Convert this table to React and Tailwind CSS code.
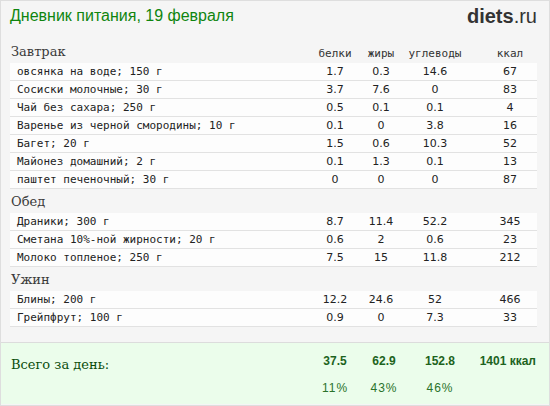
import React from "react";

const sections = [
  {
    title: "Завтрак",
    rows: [
      ["овсянка на воде; 150 г", "1.7", "0.3", "14.6", "67"],
      ["Сосиски молочные; 30 г", "3.7", "7.6", "0", "83"],
      ["Чай без сахара; 250 г", "0.5", "0.1", "0.1", "4"],
      ["Варенье из черной смородины; 10 г", "0.1", "0", "3.8", "16"],
      ["Багет; 20 г", "1.5", "0.6", "10.3", "52"],
      ["Майонез домашний; 2 г", "0.1", "1.3", "0.1", "13"],
      ["паштет печеночный; 30 г", "0", "0", "0", "87"],
    ],
  },
  {
    title: "Обед",
    rows: [
      ["Драники; 300 г", "8.7", "11.4", "52.2", "345"],
      ["Сметана 10%-ной жирности; 20 г", "0.6", "2", "0.6", "23"],
      ["Молоко топленое; 250 г", "7.5", "15", "11.8", "212"],
    ],
  },
  {
    title: "Ужин",
    rows: [
      ["Блины; 200 г", "12.2", "24.6", "52", "466"],
      ["Грейпфрут; 100 г", "0.9", "0", "7.3", "33"],
    ],
  },
];

const cols = "grid grid-cols-[300px_50px_42px_66px_69px]";

export default function App() {
  return (
    <div className="w-[550px] h-[406px] bg-[#f5f5f5] border border-[#dedede] overflow-hidden text-[#222]">
      <div className="h-[38px] flex justify-between items-start pl-[9px] pr-[12px] pt-[4px]">
        <h1 className="font-['Liberation_Sans',sans-serif] text-[16px] leading-[22px] text-[#0f850f]">
          Дневник питания, 19 февраля
        </h1>
        <div className="font-['Liberation_Sans',sans-serif] text-[20px] leading-[22px] text-[#333]">
          <span className="font-bold">diets</span>.ru
        </div>
      </div>

      <div className="pl-[9px] pr-[12px]">
        {sections.map((s, si) => (
          <div key={s.title}>
            <div className={`${cols} h-[24px] items-end pb-[3px]`}>
              <div className="font-['DejaVu_Serif',serif] text-[13px] leading-[16px] text-[#3a3a3a] pl-[1px]">
                {s.title}
              </div>
              {si === 0 &&
                ["белки", "жиры", "углеводы", "ккал"].map((h, i) => (
                  <div
                    key={h}
                    className={`text-center font-['DejaVu_Sans_Mono',monospace] text-[11px] leading-[12px] text-[#333] ${i === 3 ? "pl-[15px]" : ""}`}
                  >
                    {h}
                  </div>
                ))}
            </div>
            {s.rows.map((r) => (
              <div
                key={r[0]}
                className={`${cols} h-[18px] items-center bg-[#fdfdfd] border-b border-[#e2e2e2] text-[11px] leading-[17px]`}
              >
                <div className="pl-[7px] font-['DejaVu_Sans_Mono',monospace]">{r[0]}</div>
                <div className="text-center font-['DejaVu_Sans',sans-serif]">{r[1]}</div>
                <div className="text-center font-['DejaVu_Sans',sans-serif]">{r[2]}</div>
                <div className="text-center font-['DejaVu_Sans',sans-serif]">{r[3]}</div>
                <div className="text-center pl-[15px] font-['DejaVu_Sans',sans-serif]">{r[4]}</div>
              </div>
            ))}
          </div>
        ))}
      </div>

      <div className="mt-[15px] border-t border-[#dcdcdc] bg-[#ebfdeb] h-[62px] pt-[10px] pl-[9px] pr-[12px]">
        <div className="grid grid-cols-[300px_50px_48px_64px_1fr] items-start">
          <div className="font-['DejaVu_Serif',serif] text-[13px] leading-[18px] text-[#0b4d0b] pl-[1px] pt-[3px]">
            Всего за день:
          </div>
          {[
            ["37.5", "11%"],
            ["62.9", "43%"],
            ["152.8", "46%"],
          ].map(([v, p]) => (
            <div key={v} className="text-center font-['Liberation_Sans',sans-serif] text-[12px] text-[#1d631d]">
              <div className="font-bold leading-[16px]">{v}</div>
              <div className="mt-[12px] leading-[14px] tracking-[1px] text-[#2a722a]">{p}</div>
            </div>
          ))}
          <div className="text-right font-['Liberation_Sans',sans-serif] text-[12px] font-bold leading-[16px] text-[#1d631d] pr-[1px]">
            1401 ккал
          </div>
        </div>
      </div>
    </div>
  );
}
